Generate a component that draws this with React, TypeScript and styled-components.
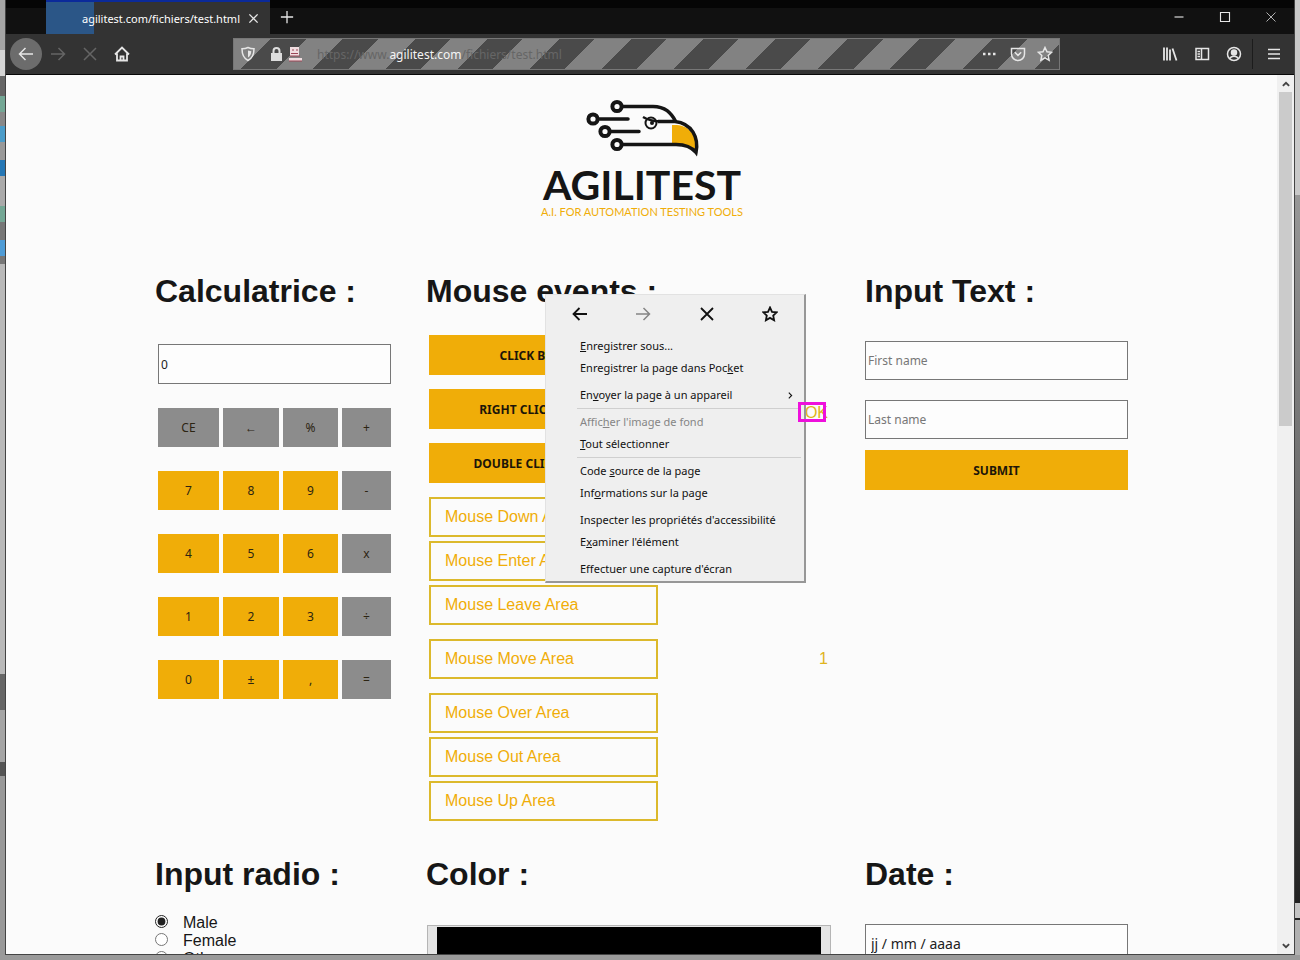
import React from "react";
import styled, { createGlobalStyle, css } from "styled-components";

const sans = `"Liberation Sans", Arial, sans-serif`;
const ui = `"Noto Sans", "Segoe UI", sans-serif`;
const gold = "#f0ad08";

const GlobalStyle = createGlobalStyle`
  *, *::before, *::after { box-sizing: border-box; }
  body { margin: 0; background: #8c8c8c; font-family: ${sans}; }
  button, input { font-family: inherit; margin: 0; border-radius: 0; }
  h2 { margin: 0; }
`;

/* Desktop and window */

const Desktop = styled.div`
  height: 100vh;
  overflow: hidden;
  padding: 0 5px 5px;
  background:
    linear-gradient(#9a9a9a, #9a9a9a) bottom / 100% 5px no-repeat,
    linear-gradient(#c9c9c9 0 195px, #989898 195px, #6c6c6c 500px, #222 903px, #c4c4c4 903px 918px, #222 918px 920px, #b0b0b0 920px) right / 6px 100% no-repeat,
    linear-gradient(
      #a5a5a5 0 50px, #d5d5d5 50px 76px, #666 76px 96px, #74a795 96px 112px, #888 112px 126px,
      #4b9cc9 126px 142px, #999 142px 160px, #2577b5 160px 176px, #aaa 176px 206px,
      #74a795 206px 222px, #777 222px 240px, #4f9cd6 240px 256px, #777 256px 264px, #b9b9b9 264px 674px,
      #666 674px 710px, #a5a5a5 710px 762px, #555 762px 776px, #999 776px
    ) left / 6px 100% no-repeat;
`;

const Window = styled.div`
  height: 100%;
  display: flex;
  flex-direction: column;
  border: 1px solid #444;
  border-top: 0;
  background: #fbfbfb;
`;

const TitleBar = styled.header`
  flex: none;
  height: 34px;
  display: flex;
  align-items: stretch;
  background: linear-gradient(#050505 0 8px, #111 8px);
  color: #fff;
  padding-left: 40px;
`;

const Tab = styled.div`
  width: 224px;
  display: flex;
  align-items: center;
  justify-content: flex-end;
  gap: 7px;
  padding: 0 11px 0 0;
  border-top: 2px solid #0b2a9a;
  background: linear-gradient(90deg, #2b5687 0 48px, #333 48px);
  font: 11px ${ui};
  white-space: nowrap;
`;

const IconButton = styled.button<{ $w?: number; $round?: boolean; $dim?: boolean }>`
  flex: none;
  align-self: center;
  width: ${(p) => p.$w ?? 32}px;
  height: ${(p) => (p.$round ? 32 : 30)}px;
  display: flex;
  align-items: center;
  justify-content: center;
  padding: 0;
  border: 0;
  border-radius: ${(p) => (p.$round ? "50%" : "0")};
  background: ${(p) => (p.$round ? "#6c6c6c" : "none")};
  color: ${(p) => (p.$dim ? "#656565" : "#e6e6e6")};
`;

const WindowButtons = styled.div`
  margin-left: auto;
  display: flex;
  align-items: center;
`;

const Toolbar = styled.nav`
  flex: none;
  height: 41px;
  display: flex;
  align-items: center;
  padding: 0 4px;
  background: #333;
  border-bottom: 1px solid #080808;
`;

const ToolGroup = styled.div<{ $end?: boolean }>`
  display: flex;
  align-items: center;
  margin-left: ${(p) => (p.$end ? "auto" : "0")};
`;

const AddressBar = styled.div`
  flex: 0 1 827px;
  min-width: 0;
  height: 32px;
  margin-left: 95px;
  padding: 0 1px 0 4px;
  display: flex;
  align-items: center;
  border: 1px solid #777;
  background: repeating-linear-gradient(135deg, #828282 0 26px, #4a4a4a 26px 51px);
`;

const Url = styled.span`
  flex: 1;
  min-width: 0;
  overflow: hidden;
  padding-left: 3px;
  font: 12px ${ui};
  color: #666;
  white-space: nowrap;
  b { font-weight: 400; color: #f4f4f4; }
`;

const Separator = styled.span`
  width: 1px;
  height: 30px;
  margin: 0 5px 0 2px;
  background: #1c1c1c;
`;

const Viewport = styled.div`
  flex: 1;
  min-height: 0;
  display: flex;
`;

const Page = styled.main`
  flex: 1;
  min-width: 0;
  overflow: hidden;
  color: #161616;
`;

const ScrollBar = styled.div`
  flex: none;
  width: 17px;
  display: flex;
  flex-direction: column;
  align-items: center;
  justify-content: space-between;
  background: #f0f0f0;
  color: #444;
`;

const Thumb = styled.div`
  width: 13px;
  height: 334px;
  background: #cbcbcb;
`;

const ScrollEnd = styled.div`
  height: 17px;
  display: flex;
  align-items: center;
  justify-content: center;
`;

/* Page content */

const LogoBox = styled.div`
  display: flex;
  justify-content: center;
  padding-top: 20px;
  height: 198px;
`;

const Columns = styled.div`
  display: grid;
  grid-template-columns: 236fr 404fr 263fr;
  column-gap: 35px;
  max-width: 973px;
  margin: 0 auto;
`;

const Section = styled.section<{ $first?: boolean }>`
  position: relative;
  min-width: 0;
  height: ${(p) => (p.$first ? "583px" : "auto")};
`;

const Title = styled.h2`
  font: bold 32px/36px ${sans};
  white-space: nowrap;
`;

const Calculator = styled.div`
  display: grid;
  grid-template-columns: 61fr 56fr 55fr 49fr;
  gap: 24px 4px;
  padding: 35px 0 0 3px;
`;

const field = css`
  display: block;
  width: 100%;
  height: 39px;
  padding: 0 2px;
  border: 1px solid #777;
  background: #fdfdfd;
  color: #222;
  font: 12px ${ui};
  &::placeholder { color: #777; opacity: 1; }
`;

const Display = styled.input`
  ${field}
  grid-column: 1 / -1;
  height: 40px;
`;

const Key = styled.button<{ $gray?: boolean }>`
  height: 39px;
  padding: 0;
  border: 0;
  background: ${(p) => (p.$gray ? "#8c8c8c" : gold)};
  color: #2c2412;
  font: 12px ${ui};
`;

const EventList = styled.div`
  padding: 26px 2px 0 3px;
`;

const EventRow = styled.div<{ $spaced?: boolean }>`
  display: flex;
  align-items: center;
  justify-content: space-between;
  height: 40px;
  margin-bottom: ${(p) => (p.$spaced ? 14 : 4)}px;
`;

const GoldButton = styled.button<{ $wide?: boolean }>`
  width: ${(p) => (p.$wide ? "100%" : "229px")};
  height: 40px;
  padding: 0;
  border: 0;
  background: ${gold};
  color: #1d1608;
  font: bold 12px ${ui};
`;

const Area = styled.div`
  width: 229px;
  height: 40px;
  padding-left: 14px;
  border: 2px solid #dcb92c;
  color: ${gold};
  font: 16px/36px ${sans};
`;

const Result = styled.output<{ $low?: boolean }>`
  position: relative;
  padding-top: ${(p) => (p.$low ? 8 : 0)}px;
  color: #e0b41c;
  font: 16px/18px ${sans};
`;

const Marker = styled.span`
  position: absolute;
  z-index: 2;
  bottom: 0;
  left: -7px;
  width: 28px;
  height: 20px;
  border: 3px solid #ee10dc;
`;

const TextForm = styled.form`
  padding-top: 32px;
  display: flex;
  flex-direction: column;
`;

const TextField = styled.input<{ $gap: number }>`
  ${field}
  margin-bottom: ${(p) => p.$gap}px;
`;

const Radios = styled.div`
  padding-top: 22px;
  label {
    display: flex;
    align-items: center;
    gap: 15px;
    height: 18px;
    font: 16px/18px ${sans};
  }
  input { width: 13px; height: 13px; margin-bottom: 3px; accent-color: #222; }
`;

const ColorInput = styled.input`
  display: block;
  width: 100%;
  height: 60px;
  margin-top: 33px;
  margin-left: 1px;
  padding: 0;
  border: 1px solid #b5b5b5;
  background: #e4e4e4;
  &::-webkit-color-swatch-wrapper { padding: 1px 9px; }
  &::-webkit-color-swatch { border: 0; }
`;

const DateInput = styled.input`
  ${field}
  margin-top: 32px;
  padding: 0 5px;
  font-size: 14px;
`;

/* Context menu */

const Menu = styled.div`
  position: absolute;
  top: 21px;
  left: 119px;
  width: 261px;
  padding: 4px 3px 1px;
  background: #efefef;
  border: 1px solid #e2e2e2;
  border-right: 2px solid #979797;
  border-bottom: 2px solid #979797;
  font: 11px/22px ${ui};
  color: #111;
`;

const MenuIcons = styled.div`
  display: flex;
  justify-content: space-between;
  padding: 0 15px;
  margin-bottom: 6px;
`;

const MenuIcon = styled(IconButton)`
  color: #111;
  &:disabled { color: #858585; }
`;

const MenuGroup = styled.div<{ $line?: boolean }>`
  margin: 0 0 2px 28px;
  padding-bottom: 2px;
  border-bottom: 1px solid ${(p) => (p.$line ? "#cfcfcf" : "transparent")};
  &:last-child { margin-bottom: 0; padding-bottom: 0; border: 0; }
`;

const MenuItem = styled.button`
  display: flex;
  justify-content: space-between;
  align-items: center;
  width: 100%;
  height: 22px;
  padding: 0 6px 0 3px;
  border: 0;
  background: none;
  font: inherit;
  color: inherit;
  text-align: left;
  white-space: nowrap;
  &:disabled { color: #858585; }
`;

type DrawProps = { d: string; size?: number; width?: number; children?: React.ReactNode };

const Draw = ({ d, size = 16, width = 1.5, children }: DrawProps) => (
  <svg width={size} height={size} viewBox="0 0 16 16" fill="none" stroke="currentColor" strokeWidth={width} aria-hidden="true">
    <path d={d} />
    {children}
  </svg>
);

const shapes = {
  back: "M15 8H1.5M7.5 2L1.5 8l6 6",
  forward: "M1 8h13.5M8.5 2l6 6-6 6",
  close: "M2 2l12 12M14 2L2 14",
  star: "M8 1.5l2 4.3 4.6.5-3.4 3.2.9 4.7L8 11.9l-4.1 2.3.9-4.7L1.4 6.3 6 5.8z",
  home: "M1 8.5L8 1.5l7 7M3 7.5v7h10v-7M6.5 14.5v-4h3v4",
  shield: "M8 1.5c2 1 4 1.3 6 1.3 0 6-1.5 9.5-6 11.7C3.5 12.3 2 8.8 2 2.8c2 0 4-.3 6-1.3z",
  plus: "M8 1v14M1 8h14",
  pocket: "M1.5 2.5h13V8a6.5 6.5 0 0 1-13 0zM4.8 6.3L8 9.4l3.2-3.1",
  library: "M2 1.5v13M5 1.5v13M8 3.5v11M10.5 2.5l4 12",
  sidebar: "M2 2.5h12.5v11H2zM7.5 2.5v11M3.5 5.5H6M3.5 8H6M3.5 10.5H6",
  menu: "M2 3.5h12M2 8h12M2 12.5h12",
};

const Logo = () => (
  <svg width="204" height="124" viewBox="0 0 204 124" role="img" aria-label="Agilitest">
    <path d="M132 30c14-1 25 6 25 27-5-6-10-8-25-8z" fill={gold} />
    <g fill="none" stroke="#151515" strokeWidth="4">
      <circle cx="77" cy="11.5" r="4.6" />
      <circle cx="53" cy="24" r="4.6" />
      <circle cx="65" cy="36.5" r="4.6" />
      <circle cx="77" cy="49.5" r="4.6" />
      <path d="M82 11.5h31c12 0 18 6 23 15.500M82 49.5h54c11 0 16 3 20 8 3-15-4-29-21-31h-17" strokeWidth="3.5" />
      <path d="M58 24h30M70 36.5h29" strokeLinecap="round" strokeWidth="3.5" />
      <path d="M103 22c5 3 9 4 17 4.5" strokeWidth="2.5" />
      <circle cx="111" cy="28" r="5.5" strokeWidth="2" />
    </g>
    <circle cx="112" cy="28" r="2" fill="#151515" />
    <text x="102" y="105" textAnchor="middle" fontFamily="Lato, sans-serif" fontWeight="700" fontSize="41" fill="#151515">AGILITEST</text>
    <text x="102" y="121" textAnchor="middle" fontFamily="Lato, sans-serif" fontSize="11" fill={gold}>A.I. FOR AUTOMATION TESTING TOOLS</text>
  </svg>
);

const keys = [
  "CE", "←", "%", "+",
  "7", "8", "9", "-",
  "4", "5", "6", "x",
  "1", "2", "3", "÷",
  "0", "±", ",", "=",
];

const areas = [
  { name: "Mouse Down Area" },
  { name: "Mouse Enter Area" },
  { name: "Mouse Leave Area", spaced: true },
  { name: "Mouse Move Area", spaced: true, result: "1" },
  { name: "Mouse Over Area" },
  { name: "Mouse Out Area" },
  { name: "Mouse Up Area" },
];

const ContextMenu = () => (
  <Menu role="menu">
    <MenuIcons>
      <MenuIcon aria-label="Précédent"><Draw d={shapes.back} width={1.8} /></MenuIcon>
      <MenuIcon aria-label="Suivant" disabled><Draw d={shapes.forward} /></MenuIcon>
      <MenuIcon aria-label="Arrêter"><Draw d={shapes.close} width={1.8} /></MenuIcon>
      <MenuIcon aria-label="Marquer cette page"><Draw d={shapes.star} width={1.8} /></MenuIcon>
    </MenuIcons>
    <MenuGroup>
      <MenuItem role="menuitem"><span><u>E</u>nregistrer sous...</span></MenuItem>
      <MenuItem role="menuitem"><span>Enregistrer la page dans Poc<u>k</u>et</span></MenuItem>
    </MenuGroup>
    <MenuGroup $line>
      <MenuItem role="menuitem">
        <span>En<u>v</u>oyer la page à un appareil</span>
        <Draw d="M5 3l5 5-5 5" size={9} width={2} />
      </MenuItem>
    </MenuGroup>
    <MenuGroup $line>
      <MenuItem role="menuitem" disabled><span>Affic<u>h</u>er l'image de fond</span></MenuItem>
      <MenuItem role="menuitem"><span><u>T</u>out sélectionner</span></MenuItem>
    </MenuGroup>
    <MenuGroup>
      <MenuItem role="menuitem"><span>Code <u>s</u>ource de la page</span></MenuItem>
      <MenuItem role="menuitem"><span>Inf<u>o</u>rmations sur la page</span></MenuItem>
    </MenuGroup>
    <MenuGroup>
      <MenuItem role="menuitem"><span>Inspecter les propriétés d'accessibilité</span></MenuItem>
      <MenuItem role="menuitem"><span>E<u>x</u>aminer l'élément</span></MenuItem>
    </MenuGroup>
    <MenuGroup>
      <MenuItem role="menuitem"><span>Effectuer une capture d'écran</span></MenuItem>
    </MenuGroup>
  </Menu>
);

export default function App() {
  return (
    <>
      <GlobalStyle />
      <Desktop>
        <Window>
          <TitleBar>
            <Tab>
              <span>agilitest.com/fichiers/test.html</span>
              <IconButton $w={12} aria-label="Close tab"><Draw d={shapes.close} size={11} width={2} /></IconButton>
            </Tab>
            <IconButton $w={34} aria-label="New tab"><Draw d={shapes.plus} size={14} /></IconButton>
            <WindowButtons>
              <IconButton $w={46} aria-label="Minimize"><Draw d="M2 8h12" size={12} /></IconButton>
              <IconButton $w={46} aria-label="Maximize"><Draw d="M2 2h12v12H2z" size={12} /></IconButton>
              <IconButton $w={46} aria-label="Close"><Draw d={shapes.close} size={12} width={1} /></IconButton>
            </WindowButtons>
          </TitleBar>

          <Toolbar>
            <ToolGroup>
              <IconButton $round aria-label="Back"><Draw d={shapes.back} /></IconButton>
              <IconButton $dim aria-label="Forward"><Draw d={shapes.forward} /></IconButton>
              <IconButton $dim aria-label="Stop"><Draw d={shapes.close} /></IconButton>
              <IconButton aria-label="Home"><Draw d={shapes.home} width={1.8} /></IconButton>
            </ToolGroup>
            <AddressBar>
              <IconButton $w={20} aria-label="Protection">
                <Draw d={shapes.shield}><path d="M8 4.5v7c2-1.5 3-3 3.3-6.3z" fill="currentColor" stroke="none" /></Draw>
              </IconButton>
              <IconButton $w={56} aria-label="Site information">
                <svg width="36" height="16" viewBox="0 0 36 16" fill="none" aria-hidden="true">
                  <path d="M5.5 8V5a3 3 0 0 1 6 0v3" stroke="#ddd" strokeWidth="2" />
                  <path d="M3 7h11v8H3z" fill="#ddd" />
                  <path d="M22 1h9v9h-9zM21 12h13v3H21z" fill="#f0dde0" />
                  <path d="M24 4h2M28 4h2M23 7.5h7M22 10h10M21 15h13" stroke="#9c4657" />
                </svg>
              </IconButton>
              <Url>https://www.<b>agilitest.com</b>/fichiers/test.html</Url>
              <IconButton $w={30} aria-label="Page actions">
                <Draw d="M2 8h2.5M7 8h2.5M12 8h2.5" width={2.5} />
              </IconButton>
              <IconButton $w={28} aria-label="Save to Pocket"><Draw d={shapes.pocket} /></IconButton>
              <IconButton $w={26} aria-label="Bookmark"><Draw d={shapes.star} /></IconButton>
            </AddressBar>
            <ToolGroup $end>
              <IconButton aria-label="Library"><Draw d={shapes.library} width={1.8} /></IconButton>
              <IconButton aria-label="Sidebar"><Draw d={shapes.sidebar} /></IconButton>
              <IconButton aria-label="Account">
                <Draw d="M4 12.5c1-3 7-3 8 0"><circle cx="8" cy="8" r="6.5" /><circle cx="8" cy="6.5" r="2.5" fill="currentColor" /></Draw>
              </IconButton>
              <Separator />
              <IconButton aria-label="Menu"><Draw d={shapes.menu} /></IconButton>
            </ToolGroup>
          </Toolbar>

          <Viewport>
            <Page>
              <LogoBox><Logo /></LogoBox>
              <Columns>
                <Section $first>
                  <Title>Calculatrice :</Title>
                  <Calculator>
                    <Display aria-label="Calculatrice" defaultValue="0" />
                    {keys.map((key, i) => (
                      <Key key={key} type="button" $gray={i < 4 || i % 4 === 3}>{key}</Key>
                    ))}
                  </Calculator>
                </Section>

                <Section $first>
                  <Title>Mouse events :</Title>
                  <EventList>
                    <EventRow $spaced><GoldButton type="button">CLICK BUTTON</GoldButton></EventRow>
                    <EventRow $spaced>
                      <GoldButton type="button">RIGHT CLICK BUTTON</GoldButton>
                      <Result $low>OK<Marker /></Result>
                    </EventRow>
                    <EventRow $spaced><GoldButton type="button">DOUBLE CLICK BUTTON</GoldButton></EventRow>
                    {areas.map((a) => (
                      <EventRow key={a.name} $spaced={a.spaced}>
                        <Area>{a.name}</Area>
                        {a.result && <Result>{a.result}</Result>}
                      </EventRow>
                    ))}
                  </EventList>
                  <ContextMenu />
                </Section>

                <Section $first>
                  <Title>Input Text :</Title>
                  <TextForm>
                    <TextField $gap={20} aria-label="First name" placeholder="First name" />
                    <TextField $gap={11} aria-label="Last name" placeholder="Last name" />
                    <GoldButton $wide type="button">SUBMIT</GoldButton>
                  </TextForm>
                </Section>

                <Section>
                  <Title>Input radio :</Title>
                  <Radios>
                    <label><input type="radio" name="gender" defaultChecked />Male</label>
                    <label><input type="radio" name="gender" />Female</label>
                    <label><input type="radio" name="gender" />Other</label>
                  </Radios>
                </Section>
                <Section>
                  <Title>Color :</Title>
                  <ColorInput type="color" aria-label="Color" defaultValue="#000000" />
                </Section>
                <Section>
                  <Title>Date :</Title>
                  <DateInput aria-label="Date" defaultValue="jj / mm / aaaa" />
                </Section>
              </Columns>
            </Page>
            <ScrollBar>
              <div>
                <ScrollEnd><Draw d="M3 11l5-5 5 5" size={10} width={3} /></ScrollEnd>
                <Thumb />
              </div>
              <ScrollEnd><Draw d="M3 5l5 5 5-5" size={10} width={3} /></ScrollEnd>
            </ScrollBar>
          </Viewport>
        </Window>
      </Desktop>
    </>
  );
}
